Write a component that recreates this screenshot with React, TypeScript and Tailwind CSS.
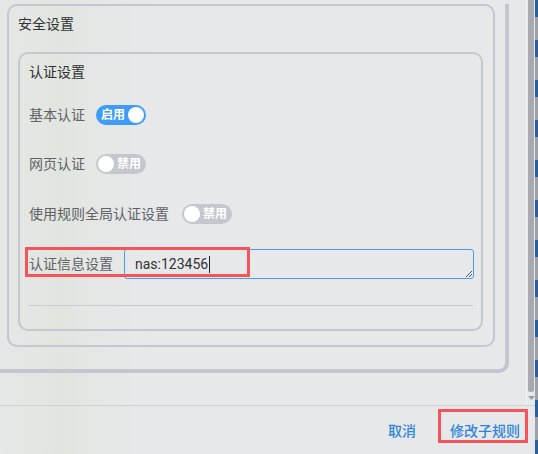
import React from 'react';

const font = { fontFamily: 'Roboto, "Noto Sans CJK SC", sans-serif' };

const Toggle = ({ on, label }: { on: boolean; label: string }) => (
  <div
    className={`w-[50px] h-5 rounded-full flex items-center px-[2px] gap-[3px] ${
      on ? 'bg-[#3f9cf6] justify-end' : 'bg-[#c4c7cd] justify-start'
    }`}
  >
    {!on && <span className="w-4 h-4 rounded-full bg-white shrink-0" />}
    <span className="text-white text-[12px] font-bold leading-none">{label}</span>
    {on && <span className="w-4 h-4 rounded-full bg-white shrink-0" />}
  </div>
);

export default function App() {
  return (
    <div
      className="w-[538px] h-[454px] flex overflow-hidden bg-[linear-gradient(90deg,#e6e7e7_0px,#e1e5df_60px,#e5e7e6_100px,#e7e8ea_150px,#e7e8ea_100%)]"
      style={font}
    >
      <div className="w-[535px] flex flex-col">
        <div className="h-[405px] flex">
          {/* scroll content */}
          <div className="w-[526px]">
            <div className="w-[509px] h-[369px] border-r-4 border-b-4 border-[#c3c6ce] rounded-br-[10px]">
              <div className="mt-[4px] ml-[7px] w-[488px] h-[343px] border-2 border-[#c3c7cf] rounded-[10px]">
                <div className="pl-[9px] pt-[8px] leading-5 text-[14px] text-[#303133]">安全设置</div>
                <div className="mt-[18px] ml-[9px] w-[465px] h-[279px] border-2 border-[#c3c7cf] rounded-[10px]">
                  <div className="pl-[9px] pt-[8px] leading-5 text-[14px] text-[#303133]">认证设置</div>

                  <div className="mt-[23px] pl-[9px] h-5 flex items-center gap-[11px]">
                    <span className="text-[14px] text-[#606266]">基本认证</span>
                    <Toggle on label="启用" />
                  </div>
                  <div className="mt-[29px] pl-[9px] h-5 flex items-center gap-[11px]">
                    <span className="text-[14px] text-[#606266]">网页认证</span>
                    <Toggle on={false} label="禁用" />
                  </div>
                  <div className="mt-[30px] pl-[9px] h-5 flex items-center gap-[13px]">
                    <span className="text-[14px] text-[#606266]">使用规则全局认证设置</span>
                    <Toggle on={false} label="禁用" />
                  </div>

                  <div className="mt-[25px] pl-[9px] h-[30px] flex items-center relative">
                    <span className="w-[95px] text-[14px] text-[#606266]">认证信息设置</span>
                    <div className="w-[350px] h-[30px] border border-[#4a9cf0] rounded-[3px] relative flex items-center pl-[10px]">
                      <span className="text-[14px] text-[#333] leading-none">nas:123456</span>
                      <span className="w-px h-[17px] bg-[#222] ml-[1px]" />
                      <svg className="absolute right-0 bottom-0" width="9" height="9" viewBox="0 0 9 9">
                        <path d="M8 2 L2 8 M8 5 L5 8" stroke="#555" strokeWidth="1" />
                      </svg>
                    </div>
                    <div className="absolute left-[5px] top-[-2px] w-[225px] h-[30px] border-[3px] border-[#f4545a]" />
                  </div>

                  <div className="mt-[26px] mx-[8px] h-px bg-[#c8cbd1]" />
                </div>
              </div>
            </div>
          </div>
          {/* scrollbar */}
          <div className="w-[9px] border-l border-[#f4f5f6] relative">
            <div className="ml-[1px] w-[6px] h-[392px] bg-[#a8aaaf] rounded-b-[2px]" />
            <svg className="absolute left-[1px] top-[396px]" width="7" height="5" viewBox="0 0 7 5">
              <path d="M0 0 L7 0 L3.5 4 Z" fill="#9a9ca1" />
            </svg>
          </div>
        </div>

        <div className="h-px bg-[#cfd0d3]" />

        <div className="flex-1 flex justify-end items-start pt-[18px] pr-[15px] gap-[34px]">
          <span className="text-[14px] leading-[14px] text-[#2f86d8] font-medium">取消</span>
          <span className="relative text-[14px] leading-[14px] text-[#2f86d8] font-medium">
            修改子规则
            <span className="absolute left-[-12px] right-[-8px] top-[-15px] bottom-[-5px] border-[3px] border-[#f4545a]" />
          </span>
        </div>
      </div>
      <div className="w-[3px] h-full bg-[repeating-linear-gradient(to_bottom,#2b5c9c_0px,#2b5c9c_17px,#9ca1a9_17px,#9ca1a9_40px)]" />
    </div>
  );
}
